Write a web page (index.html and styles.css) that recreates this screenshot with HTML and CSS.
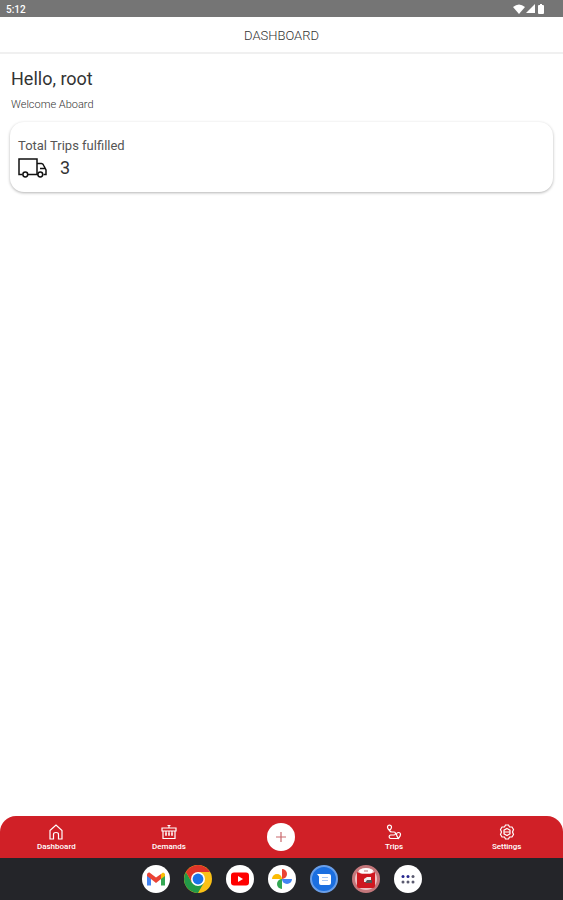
FILE: index.html
```html
<!DOCTYPE html>
<html lang="en">
<head>
    <meta charset="UTF-8">
    <meta name="viewport" content="width=device-width, initial-scale=1.0">
    <title>Dashboard</title>
    <link rel="stylesheet" href="styles.css">
</head>
<body>

<!-- Status bar -->
<div class="status-bar">
    <span>5:12</span>
    <div class="status-icons">
        <svg width="12" height="10" viewBox="0 0 12 10"><path d="M0 3Q6-2 12 3L6 10Z"/></svg>
        <svg width="10" height="10" viewBox="0 0 10 10"><path d="M9 0V9H0Z"/></svg>
        <svg width="8" height="10" viewBox="0 0 8 10"><path d="M2 1H3V0H5V1H6Q7 1 7 2V9Q7 10 6 10H2Q1 10 1 9V2Q1 1 2 1Z"/></svg>
    </div>
</div>

<header class="header">
    <h1>DASHBOARD</h1>
</header>

<main class="content">
    <h2>Hello, root</h2>
    <p class="welcome">Welcome Aboard</p>

    <section class="card">
        <h3>Total Trips fulfilled</h3>
        <div class="trips">
            <svg width="29" height="20" viewBox="0 0 29 20" fill="none" stroke="#111" stroke-width="1.5">
                <path d="M4.5 16.5H1V1H19V16.5H10M19 5.5H23.5Q25 5.5 26 8L28 12V16.5H25.5M22 10.5H27.5M19 16.5H20"/>
                <circle cx="7.3" cy="16.5" r="2.4"/>
                <circle cx="22.3" cy="16.5" r="2.4"/>
            </svg>
            <span>3</span>
        </div>
    </section>
</main>

<!-- Bottom tabs -->
<nav class="tabs">
    <a href="#dashboard">
        <svg width="16" height="16" viewBox="0 0 16 16"><path d="M2 6.5L8 1L14 6.5V15H10.5V10.5Q10.5 8.5 8 8.5T5.5 10.5V15H2Z"/></svg>
        <span>Dashboard</span>
    </a>
    <a href="#demands">
        <svg width="16" height="16" viewBox="0 0 16 16"><path d="M1 4H15V7H1ZM2 7V14.5H14V7M8 1V4M6.5 1.5H9.5M5 7V12M8 7V12M11 7V12M4 10H6M7 10H9M10 10H12"/></svg>
        <span>Demands</span>
    </a>
    <button type="button" class="add" aria-label="Add">
        <svg width="12" height="12" viewBox="0 0 12 12"><path d="M6 1V11M1 6H11"/></svg>
    </button>
    <a href="#trips">
        <svg width="16" height="16" viewBox="0 0 16 16">
            <path d="M3.5 6.5C2 5 1.5 4.3 1.5 3.2A2 2 0 0 1 5.5 3.2C5.5 4.3 5 5 3.5 6.5Q4 8 6 8H8Q9.500 8 9.500 9.500T8 11H4.500A1.800 1.800 0 0 0 4.500 14.500H12.500M12.500 14.500C11 12.500 10.500 12 10.500 10.500A2 2 0 0 1 14.500 10.500C14.500 12 14 12.500 12.500 14.500Z"/>
        </svg>
        <span>Trips</span>
    </a>
    <a href="#settings">
        <svg width="16" height="16" viewBox="0 0 16 16">
            <path d="M6.500 1H9.500L10.500 3L13 3L14.500 5.500L13.500 8L14.500 10.500L13 13H10.500L9.500 15H6.500L5.500 13H3L1.500 10.500L2.500 8L1.500 5.500L3 3H5.500Z"/>
            <path d="M8 4.500L11 6.200V9.800L8 11.500L5 9.800V6.200ZM5 8H11"/>
        </svg>
        <span>Settings</span>
    </a>
</nav>

<!-- Device app dock -->
<footer class="dock">
    <a href="#gmail" aria-label="Gmail">
        <svg viewBox="0 0 28 28">
            <circle cx="14" cy="14" r="14" fill="#fff"/>
            <path d="M5 9V20.500H9V12Z" fill="#4285f4"/>
            <path d="M23 9V20.500H19V12Z" fill="#34a853"/>
            <path d="M19 9L21 7.500Q23 7.500 23 10V11L19 14Z" fill="#fbbc04"/>
            <path d="M5 11V10Q5 7 7.500 7.500L14 12.500L19 9V14L14 18L9 14Z" fill="#ea4335"/>
        </svg>
    </a>
    <a href="#chrome" aria-label="Chrome">
        <svg viewBox="0 0 28 28">
            <circle cx="14" cy="14" r="14" fill="#fbc116"/>
            <path d="M14 14L8 17.500L1.900 7A14 14 0 0 0 14 28L20 17.500Z" fill="#229a48"/>
            <path d="M14 14L8 17.500L1.900 7A14 14 0 0 1 26.100 7H14Z" fill="#df3428"/>
            <circle cx="14" cy="14" r="7" fill="#fff"/>
            <circle cx="14" cy="14" r="5.400" fill="#1a73e8"/>
        </svg>
    </a>
    <a href="#youtube" aria-label="YouTube">
        <svg viewBox="0 0 28 28">
            <circle cx="14" cy="14" r="14" fill="#fff"/>
            <rect x="5" y="7.500" width="18" height="13" rx="3" fill="#f00"/>
            <path d="M12 11V17L17 14Z" fill="#fff"/>
        </svg>
    </a>
    <a href="#photos" aria-label="Photos">
        <svg viewBox="0 0 28 28">
            <circle cx="14" cy="14" r="14" fill="#fff"/>
            <path d="M14 4A5 5 0 0 1 14 14Z" fill="#ea4335"/>
            <path d="M24 14A5 5 0 0 1 14 14Z" fill="#4285f4"/>
            <path d="M14 24A5 5 0 0 1 14 14Z" fill="#34a853"/>
            <path d="M4 14A5 5 0 0 1 14 14Z" fill="#fbbc04"/>
        </svg>
    </a>
    <a href="#messages" aria-label="Messages">
        <svg viewBox="0 0 28 28">
            <circle cx="14" cy="14" r="13" fill="#1b6fe0" stroke="#6a9fe8" stroke-width="2"/>
            <path d="M7 9H19Q21 9 21 11V18Q21 20 19 20H11Q9 20 9 18V11.500Z" fill="#fff"/>
            <path d="M12 12.500H18M12 15.500H18" stroke="#a9c8f5"/>
        </svg>
    </a>
    <a href="#trip-app" aria-label="Trip app">
        <svg viewBox="0 0 28 28">
            <circle cx="14" cy="14" r="12.500" fill="#efc0c2" stroke="#c4777b" stroke-width="3"/>
            <path d="M7 5Q14 1 21 5L20 8H8Z" fill="#fff"/>
            <path d="M5 7L10 9H18L23 7V21Q23 23 21 23H7Q5 23 5 21Z" fill="#cf1820"/>
            <path d="M12 6H16" stroke="#b77"/>
            <path d="M12 14L15 12H19V17H12Z" fill="#eee"/>
            <path d="M15 15H20V18H13Z" fill="#555"/>
        </svg>
    </a>
    <a href="#apps" aria-label="All apps">
        <svg viewBox="0 0 28 28">
            <circle cx="14" cy="14" r="14" fill="#fff"/>
            <g fill="#27278f">
                <circle cx="9" cy="11.500" r="1.500"/>
                <circle cx="14" cy="11.500" r="1.500"/>
            </g>
            <g fill="#5b5b70">
                <circle cx="19" cy="11.500" r="1.500"/>
                <circle cx="9" cy="17" r="1.500"/>
                <circle cx="14" cy="17" r="1.500"/>
                <circle cx="19" cy="17" r="1.500"/>
            </g>
        </svg>
    </a>
</footer>

</body>
</html>
```
FILE: styles.css
```css
* {
    box-sizing: border-box;
}

body {
    font-family: Roboto, sans-serif;
    margin: 0;
    min-height: 100vh;
    display: flex;
    flex-direction: column;
    background-color: #fff;
    color: #333;
}

h1, h2, h3, p {
    margin: 0;
    font-weight: 400;
}

.status-bar {
    display: flex;
    justify-content: space-between;
    align-items: center;
    height: 17px;
    padding: 1px 18px 0 6px;
    background-color: #757575;
    color: #fff;
    font-size: 10px;
    font-weight: 500;
}

.status-icons {
    display: flex;
    gap: 1px;
    fill: #fff;
}

.header {
    display: flex;
    justify-content: center;
    align-items: center;
    height: 37px;
    padding-top: 2px;
    border-bottom: 2px solid #f0f0f0;
}

.header h1 {
    font-size: 13px;
    font-weight: 300;
}

.content {
    flex: 1;
    padding: 14px 10px;
}

.content h2 {
    font-size: 18px;
    line-height: 22px;
    padding-left: 1px;
}

.welcome {
    font-size: 11px;
    font-weight: 300;
    line-height: 12px;
    margin-top: 9px;
    padding-left: 1px;
}

.card {
    margin-top: 11px;
    padding: 16px 8px 14px;
    border-radius: 14px;
    box-shadow: 0 1px 3px rgba(0, 0, 0, 0.3);
}

.card h3 {
    font-size: 13px;
    line-height: 16px;
    color: #555;
}

.trips {
    display: flex;
    align-items: center;
    gap: 13px;
    margin-top: 4px;
    font-size: 18px;
    line-height: 20px;
}

.tabs {
    display: grid;
    grid-template-columns: repeat(5, 1fr);
    align-items: center;
    justify-items: center;
    height: 42px;
    border-radius: 16px 16px 0 0;
    background-color: #d02027;
}

.tabs a {
    display: flex;
    flex-direction: column;
    align-items: center;
    gap: 1px;
    padding-top: 3px;
    color: #fff;
    font-size: 8px;
    font-weight: 500;
    line-height: 12px;
    text-decoration: none;
}

.tabs svg {
    fill: none;
    stroke: #fff;
    stroke-width: 1.2;
}

.add {
    display: flex;
    justify-content: center;
    align-items: center;
    width: 28px;
    height: 28px;
    padding: 0;
    border: none;
    border-radius: 50%;
    background-color: #fff;
    cursor: pointer;
}

.add svg {
    stroke: #c9686c;
}

.dock {
    display: flex;
    justify-content: center;
    align-items: center;
    gap: 14px;
    height: 42px;
    background-color: #242529;
}

.dock a,
.dock svg {
    display: block;
    width: 28px;
    height: 28px;
}
```
